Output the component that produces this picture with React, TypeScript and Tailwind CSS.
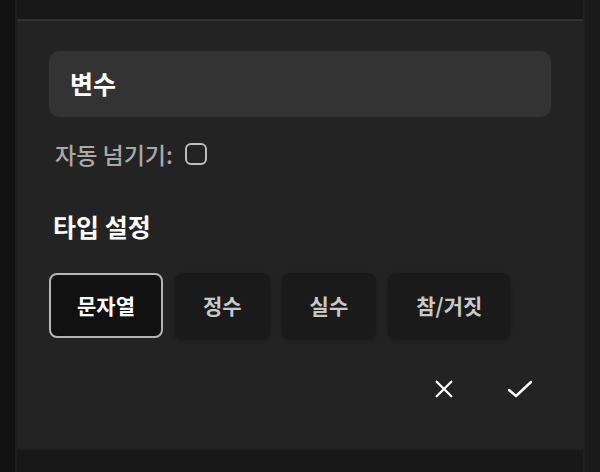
import { useState } from "react";

const types = ["문자열", "정수", "실수", "참/거짓"];

const App = () => {
  const [selected, setSelected] = useState(0);
  const [auto, setAuto] = useState(false);

  return (
    <div
      className="w-[600px] h-[472px] bg-[#121212] flex overflow-hidden"
      style={{ fontFamily: '"Noto Sans CJK KR", "Noto Sans", sans-serif' }}
    >
      <div className="w-[17px] shrink-0 border-r-2 border-[#1e1e1e]" />
      <div className="w-[566px] shrink-0 flex flex-col bg-[#232323]">
        <div className="h-[21px] bg-[#181818] border-b-2 border-[#323232] shrink-0" />
        <div className="flex-1 px-8 pt-[30px]">
          <div className="h-[66px] rounded-[10px] bg-[#333333] flex items-center px-[21px] text-white text-[25px] font-bold">
            변수
          </div>
          <div className="flex items-center gap-[12px] mt-[22px] pl-[6px] h-[30px]">
            <span className="text-[#a9a9a9] text-[23px] font-medium">자동 넘기기:</span>
            <button
              onClick={() => setAuto(!auto)}
              className="w-[22px] h-[22px] rounded-[6px] border-2 border-[#bdbdbd]"
            />
          </div>
          <h2 className="text-white text-[25px] font-bold mt-[40px] pl-1 leading-[34px]">타입 설정</h2>
          <div className="flex gap-[12px] mt-[30px]">
            {types.map((t, i) => (
              <button
                key={t}
                onClick={() => setSelected(i)}
                className={
                  i === selected
                    ? "h-[65px] px-[26px] rounded-[8px] border-2 border-[#b5b5b5] bg-[#111111] text-white text-[21px] font-bold"
                    : "h-[65px] px-[26px] rounded-[8px] border-2 border-transparent bg-[#1a1a1a] text-[#c8c8c8] text-[21px] font-bold shadow-[0_2px_4px_rgba(0,0,0,0.35)]"
                }
              >
                {t}
              </button>
            ))}
          </div>
          <div className="flex justify-end gap-[44px] mt-[35px] pr-[15px]">
            <button className="w-8 h-8 flex items-center justify-center">
              <svg width="22" height="22" viewBox="0 0 24 24" fill="none" stroke="white" strokeWidth="2.4" strokeLinecap="round">
                <path d="M4 4 L20 20 M20 4 L4 20" />
              </svg>
            </button>
            <button className="w-8 h-8 flex items-center justify-center">
              <svg width="26" height="22" viewBox="0 0 26 22" fill="none" stroke="white" strokeWidth="2.4" strokeLinecap="round" strokeLinejoin="round">
                <path d="M2 12 L9 18 L24 4" />
              </svg>
            </button>
          </div>
        </div>
        <div className="h-[23px] bg-[#181818] border-t-2 border-[#1c1c1c] shrink-0" />
      </div>
      <div className="flex-1 bg-[#1a1a1a] border-l-2 border-[#222222]" />
    </div>
  );
};

export default App;
